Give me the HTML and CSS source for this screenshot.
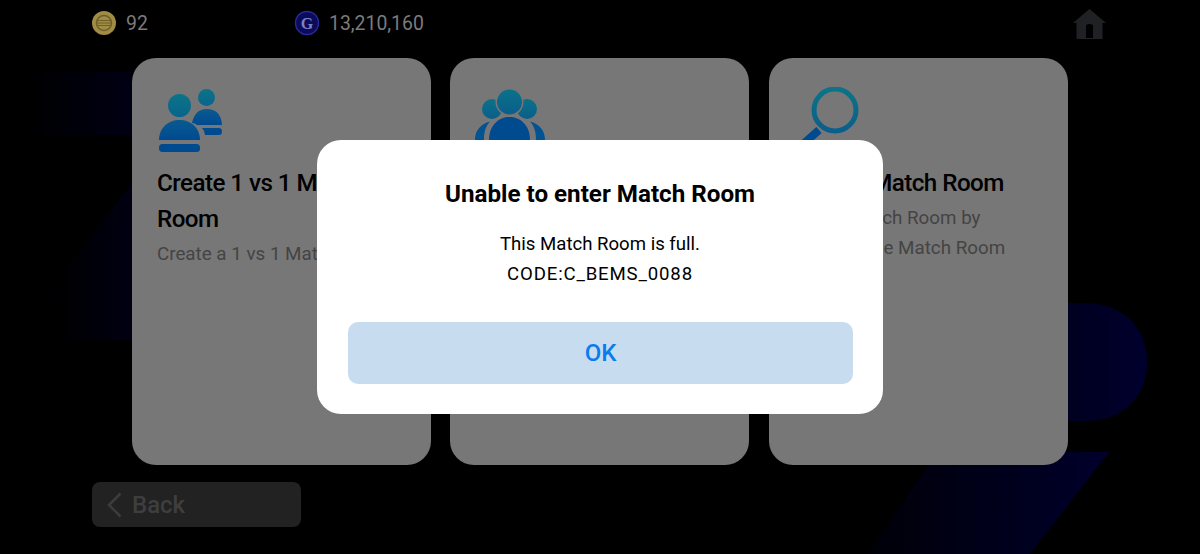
FILE: index.html
```html
<!DOCTYPE html>
<html lang="en">
<head>
<meta charset="utf-8">
<title>Match Room</title>
<link rel="stylesheet" href="styles.css">
</head>
<body>
<svg class="backdrop" width="1200" height="554" viewBox="0 0 1200 554" aria-hidden="true">
  <defs>
    <linearGradient id="fadeTop" x1="0" y1="0" x2="1" y2="0"><stop offset="0" stop-color="#000"/><stop offset="1" stop-color="#000014"/></linearGradient>
    <linearGradient id="fadeDiag" x1="0" y1="0" x2="1" y2="0"><stop offset="0" stop-color="#000"/><stop offset="1" stop-color="#000012"/></linearGradient>
    <linearGradient id="fadeBlob" x1="0" y1="0" x2="1" y2="0"><stop offset="0" stop-color="#000020"/><stop offset="1" stop-color="#00002e"/></linearGradient>
    <linearGradient id="fadeFoot" x1="0" y1="0" x2="1" y2="0"><stop offset="0" stop-color="#000008"/><stop offset="1" stop-color="#00002c"/></linearGradient>
  </defs>
  <path d="M20 72H132V135H20Z" fill="url(#fadeTop)"/>
  <path d="M132 183V340L70 340L50 290Z" fill="url(#fadeDiag)"/>
  <path d="M1068 303H1085C1125 303 1147 330 1147 362C1147 395 1125 421 1085 421H1068Z" fill="url(#fadeBlob)"/>
  <path d="M937 452H1109L1030 554H867Z" fill="url(#fadeFoot)"/>
</svg>
<header class="topbar">
  <div class="stat stat-coin">
    <svg class="coin" width="26" height="26" viewBox="0 0 26 26"><circle cx="13" cy="13" r="12" fill="#a08c45"/><circle cx="13" cy="13" r="7.500" fill="none" stroke="#6f5f26" stroke-width="1.600"/><path d="M7 10.500H19M6 13H20M7 15.500H19" stroke="#6f5f26" stroke-width="1.200"/></svg>
    <span>92</span>
  </div>
  <div class="stat stat-gp">
    <svg class="coin" width="26" height="26" viewBox="0 0 26 26"><circle cx="13" cy="13" r="11.500" fill="#0b0b5c" stroke="#2a2a9c" stroke-width="1.400"/><text x="13" y="19" text-anchor="middle" class="coin-letter">G</text></svg>
    <span>13,210,160</span>
  </div>
  <svg class="home" width="33" height="31" viewBox="0 0 33 31"><path d="M16.500 0L33 14H29.500V30H3.500V14H0Z M13 29H20V17Q20 15 16.500 15Q13 15 13 17Z" fill="#202124" fill-rule="evenodd"/></svg>
</header>
<main class="cards">
  <section class="card">
    <svg class="card-icon" width="66" height="66" viewBox="0 0 66 66">
      <defs>
        <linearGradient id="g1" x1="0" y1="0" x2="0" y2="1"><stop offset="0" stop-color="#0a7488"/><stop offset="1" stop-color="#0a648c"/></linearGradient>
        <linearGradient id="b1" x1="0" y1="0" x2="0" y2="1"><stop offset="0" stop-color="#0a5a90"/><stop offset="1" stop-color="#004a90"/></linearGradient>
      </defs>
      <circle cx="47.500" cy="10.500" r="8.500" fill="url(#g1)"/>
      <path d="M33 36Q36 22 47.500 22Q62 22 63 38H38Q36 36 33 36Z" fill="url(#b1)"/>
      <path d="M43 41H60Q63 41 63 44.500Q63 48 60 48H46Q46 44 43 41Z" fill="#004a90"/>
      <circle cx="20.500" cy="18.500" r="11.500" fill="url(#g1)"/>
      <path d="M0 53C0 41 9 33 20.500 33C32 33 41 41 41 53Z" fill="url(#b1)"/>
      <rect x="0" y="57" width="41" height="8" rx="3.500" fill="#004a90"/>
    </svg>
    <h2 class="card-title">Create 1 vs 1 Match<br>Room</h2>
    <p class="card-text">Create a 1 vs 1 Match Room</p>
  </section>
  <section class="card">
    <svg class="card-icon icon-group" width="70" height="53" viewBox="0 0 70 53">
      <defs>
        <linearGradient id="g2" x1="0" y1="0" x2="0" y2="1"><stop offset="0" stop-color="#0a7288"/><stop offset="1" stop-color="#0a5e8c"/></linearGradient>
      </defs>
      <circle cx="17" cy="22" r="10" fill="url(#g2)"/>
      <circle cx="52" cy="22" r="10" fill="url(#g2)"/>
      <circle cx="34.500" cy="15" r="14" fill="#777"/>
      <circle cx="34.500" cy="15" r="12.500" fill="url(#g2)"/>
      <path d="M0 53C0 43 6 37 15 34.500C10 40 9 46 9 53Z M70 53C70 43 64 37 55 34.500C60 40 61 46 61 53Z" fill="#035292"/>
      <path d="M14 53C14 38 24 30 34.500 30C45 30 55 38 55 53Z" fill="#004a90"/>
    </svg>
  </section>
  <section class="card">
    <svg class="card-icon" width="66" height="66" viewBox="0 0 66 66">
      <defs>
        <linearGradient id="g3" x1="0" y1="0" x2="0" y2="1"><stop offset="0" stop-color="#0a7488"/><stop offset="1" stop-color="#0a5e8c"/></linearGradient>
      </defs>
      <circle cx="39" cy="23" r="21" fill="none" stroke="url(#g3)" stroke-width="5"/>
      <path d="M23 43L5 59" stroke="#004a90" stroke-width="8"/>
    </svg>
    <h2 class="card-title">Search Match Room</h2>
    <p class="card-text">Find a Match Room by<br>entering the Match Room</p>
  </section>
</main>
<footer class="footer">
  <button class="back" type="button">
    <svg width="16" height="26" viewBox="0 0 16 26"><path d="M14.500 1.500L3 13L14.500 24.500" fill="none" stroke="#3c3c3e" stroke-width="2.500"/></svg>
    <span>Back</span>
  </button>
</footer>
<div class="dialog" role="dialog">
  <h1 class="dialog-title">Unable to enter Match Room</h1>
  <p class="dialog-text">This Match Room is full.<br><span class="dialog-code">CODE:C_BEMS_0088</span></p>
  <button class="dialog-ok" type="button">OK</button>
</div>
</body>
</html>
```
FILE: styles.css
```css
* { box-sizing: border-box; }
html, body { margin: 0; height: 100%; }
body {
  width: 1200px;
  height: 554px;
  overflow: hidden;
  background: #000;
  position: relative;
  font-family: Roboto, "Noto Sans", sans-serif;
  color: #000;
}
.backdrop { position: absolute; left: 0; top: 0; }
.topbar {
  position: relative;
  height: 58px;
  display: flex;
  align-items: flex-start;
  padding: 10px 94px 0 91px;
}
.stat {
  display: flex;
  align-items: center;
  gap: 9px;
  height: 26px;
  font-size: 19.400px;
  color: #7b7b7b;
}
.stat-coin { width: 203px; }
.coin { flex: none; }
.coin-letter { font: bold 16px "Liberation Serif", serif; fill: #8080c0; }
.home { margin: -1px 0 0 auto; }
.cards {
  position: relative;
  display: flex;
  gap: 19px;
  margin-left: 132px;
}
.card {
  width: 299px;
  height: 407px;
  background: #777;
  border-radius: 24px;
  padding: 29px 20px 0 25px;
}
.card:last-child { margin-left: 1px; }
.card-icon { display: block; margin-left: 2px; }
.icon-group { margin-left: 0; }
.card-title {
  margin: 12px 0 0;
  font-size: 24.200px;
  line-height: 36px;
  font-weight: 500;
  letter-spacing: -0.55px;
  white-space: nowrap;
}
.card-text {
  margin: 2px 0 0;
  font-size: 18.800px;
  line-height: 30px;
  color: #444;
}
.footer { position: relative; padding: 17px 0 0 92px; }
.back {
  display: flex;
  align-items: center;
  gap: 10px;
  width: 209px;
  height: 45px;
  padding: 0 0 0 14px;
  border: 0;
  border-radius: 8px;
  background: #222;
  color: #3e3e40;
  font: 500 24px Roboto, sans-serif;
}
.dialog {
  position: absolute;
  left: 317px;
  top: 140px;
  width: 566px;
  height: 274px;
  background: #fff;
  border-radius: 24px;
  padding: 37px 31px 0;
  text-align: center;
}
.dialog-title {
  margin: 0;
  font-size: 24.200px;
  line-height: 34px;
  font-weight: 700;
}
.dialog-text {
  margin: 18px 0 0;
  font-size: 18.600px;
  line-height: 30px;
}
.dialog-code { letter-spacing: 0.85px; }
.dialog-ok {
  display: block;
  width: 505px;
  height: 62px;
  margin-top: 33px;
  border: 0;
  border-radius: 10px;
  background: #c8dcf0;
  color: #0a7cf0;
  font: 500 24px Roboto, sans-serif;
}
```
